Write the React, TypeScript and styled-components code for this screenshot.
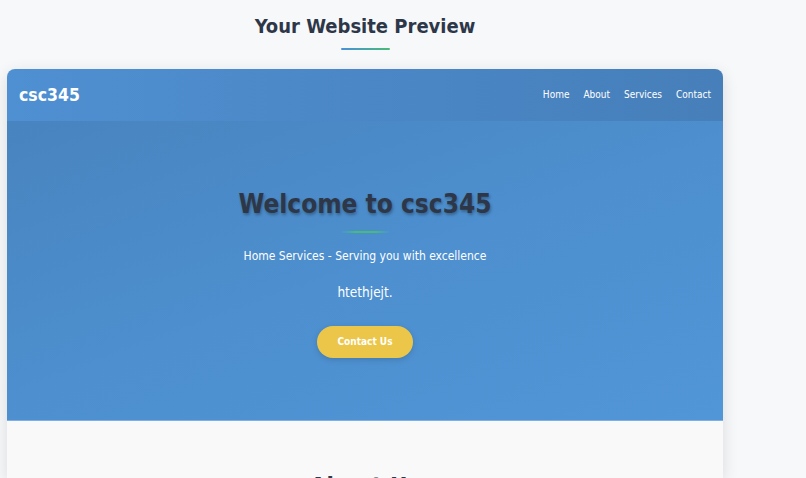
import styled, { createGlobalStyle } from 'styled-components';

const GlobalStyle = createGlobalStyle`
    * {
        box-sizing: border-box;
    }
    html, body {
        margin: 0;
        padding: 0;
        background: #f7f8fa;
        font-family: "DejaVu Sans Condensed", "DejaVu Sans", sans-serif;
        overflow: hidden;
    }
`;

const Page = styled.div`
    width: 806px;
    height: 478px;
    padding: 12px 83px 0 7px;
    display: flex;
    flex-direction: column;
    align-items: stretch;
`;

const PageTitle = styled.h1`
    margin: 0;
    text-align: center;
    font-size: 20px;
    font-weight: 700;
    color: #2d3748;
    line-height: 28px;
`;

const Divider = styled.div<{ $gradient: string; $top: number }>`
    width: 49px;
    height: 2px;
    margin: ${(p) => p.$top}px auto 0;
    border-radius: 1px;
    background: ${(p) => p.$gradient};
`;

const Frame = styled.div`
    margin-top: 19px;
    border-radius: 8px 8px 0 0;
    overflow: hidden;
    background: #f9f9f9;
    box-shadow: 0 4px 16px rgba(0, 0, 0, 0.12);
    height: 420px;
`;

const Header = styled.header`
    height: 52px;
    display: flex;
    align-items: center;
    justify-content: space-between;
    padding: 0 12px 0 12px;
    background: linear-gradient(90deg, #4f90d2 0%, #4a85c4 60%, #467fb9 100%);
`;

const Logo = styled.div`
    color: #ffffff;
    font-size: 17.5px;
    font-weight: 700;
`;

const Nav = styled.nav`
    display: flex;
    gap: 14px;
`;

const NavLink = styled.a`
    color: #ffffff;
    font-size: 10px;
    text-decoration: none;
`;

const Hero = styled.section`
    height: 300px;
    display: flex;
    flex-direction: column;
    align-items: center;
    padding-top: 65px;
    background: linear-gradient(160deg, #4884bf 0%, #4d8fcf 50%, #5196d7 100%);
    border-bottom: 1px solid #7fb0e2;
`;

const HeroTitle = styled.h2`
    margin: 0;
    font-size: 26px;
    font-weight: 700;
    line-height: 36px;
    color: #2d3748;
    text-shadow: 1px 2px 3px rgba(0, 0, 0, 0.3);
`;

const HeroText = styled.p<{ $size: number; $top: number }>`
    margin: ${(p) => p.$top}px 0 0;
    color: #ffffff;
    font-size: ${(p) => p.$size}px;
    line-height: 18px;
`;

const CtaButton = styled.button`
    margin-top: 25px;
    width: 96px;
    height: 32px;
    border: none;
    border-radius: 16px;
    background: #ecc648;
    color: #ffffff;
    font-family: inherit;
    font-size: 10px;
    font-weight: 700;
    box-shadow: 0 2px 6px rgba(0, 0, 0, 0.15);
    cursor: pointer;
`;

const About = styled.section`
    display: flex;
    justify-content: center;
    padding-top: 52px;
`;

const AboutTitle = styled.h2`
    margin: 0;
    font-size: 24px;
    font-weight: 700;
    color: #2d3748;
`;

function App() {
    return (
        <>
            <GlobalStyle />
            <Page>
                <PageTitle>Your Website Preview</PageTitle>
                <Divider $top={8} $gradient='linear-gradient(90deg, #4a90d9, #48bb78)' />
                <Frame>
                    <Header>
                        <Logo>csc345</Logo>
                        <Nav>
                            <NavLink href='#'>Home</NavLink>
                            <NavLink href='#'>About</NavLink>
                            <NavLink href='#'>Services</NavLink>
                            <NavLink href='#'>Contact</NavLink>
                        </Nav>
                    </Header>
                    <Hero>
                        <HeroTitle>Welcome to csc345</HeroTitle>
                        <Divider $top={9} $gradient='linear-gradient(90deg, #4a90d9, #48bb78 30%, #48bb78 70%, #4a90d9)' />
                        <HeroText $size={12} $top={14}>Home Services - Serving you with excellence</HeroText>
                        <HeroText $size={13.5} $top={18}>htethjejt.</HeroText>
                        <CtaButton>Contact Us</CtaButton>
                    </Hero>
                    <About>
                        <AboutTitle>About Us</AboutTitle>
                    </About>
                </Frame>
            </Page>
        </>
    );
}

export default App;
